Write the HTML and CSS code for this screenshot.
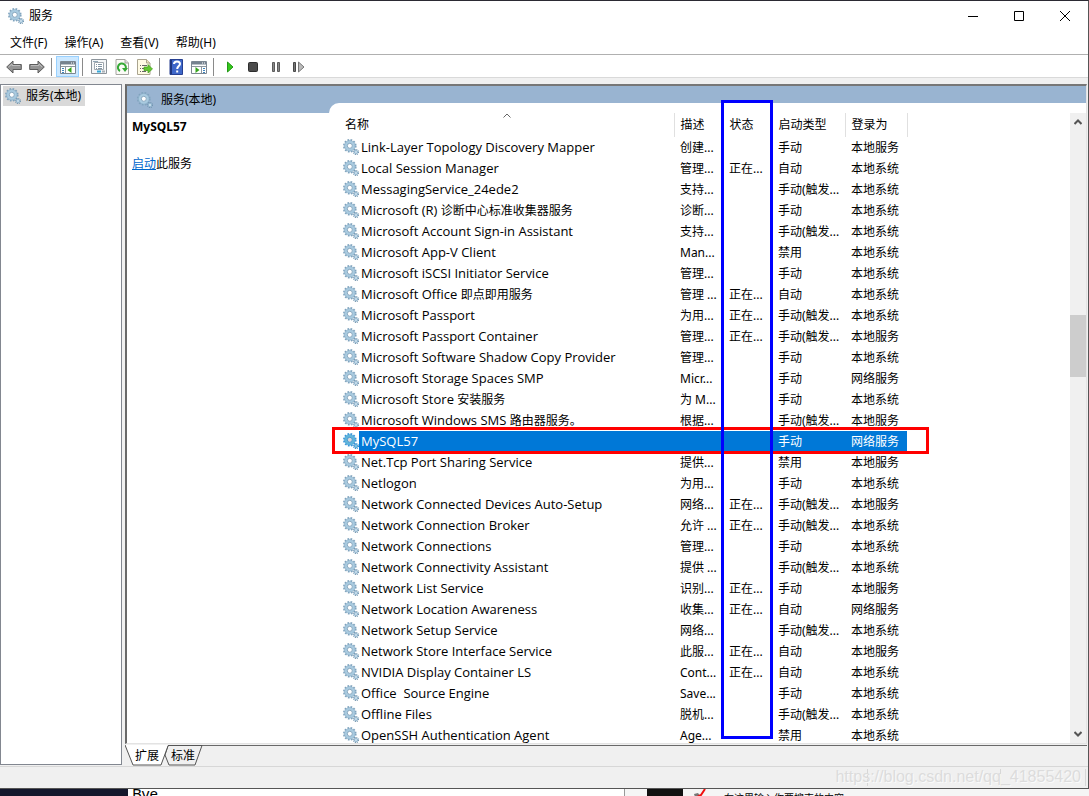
FILE: index.html
```html
<!DOCTYPE html>
<html lang="zh-CN">
<head>
<meta charset="utf-8">
<title>服务</title>
<link rel="stylesheet" href="styles.css">
</head>
<body>
<svg class="defs" aria-hidden="true">
  <defs>
    <symbol id="gear" viewBox="0 0 16 16">
      <circle cx="6.8" cy="6.8" r="5.9" fill="none" stroke="#7fa3bd" stroke-width="1.8" stroke-dasharray="1.7 1.39"/>
      <circle cx="6.8" cy="6.8" r="4" fill="#fff" stroke="#a9cbe0" stroke-width="2.8"/>
      <circle cx="6.8" cy="6.8" r="5.3" fill="none" stroke="#86aac4" stroke-width=".6"/>
      <circle cx="6.8" cy="6.8" r="2.5" fill="#fff" stroke="#6f93b0" stroke-width=".8"/>
      <circle cx="13" cy="13" r="2.5" fill="none" stroke="#7294ae" stroke-width="1.1" stroke-dasharray="1.1 .86"/>
      <circle cx="13" cy="13" r="1.5" fill="#dcebf5" stroke="#8fb4cd" stroke-width="1.2"/>
    </symbol>
  </defs>
</svg>
<div class="window">
  <header class="titlebar">
    <svg class="icon"><use href="#gear"/></svg>
    <h1 class="title">服务</h1>
    <div class="controls">
      <button class="control" aria-label="最小化"><svg viewBox="0 0 10 10"><path d="M0 5.5h10"/></svg></button>
      <button class="control" aria-label="最大化"><svg viewBox="0 0 10 10"><path d="M.5.5h9v9h-9z"/></svg></button>
      <button class="control" aria-label="关闭"><svg viewBox="0 0 10 10"><path d="M0 0l10 10M10 0L0 10"/></svg></button>
    </div>
  </header>
  <nav class="menubar">
    <button class="menu">文件(F)</button>
    <button class="menu">操作(A)</button>
    <button class="menu">查看(V)</button>
    <button class="menu">帮助(H)</button>
  </nav>
  <div class="toolbar">
    <button class="tool" aria-label="后退"><svg viewBox="0 0 16 16"><path d="M.7 8L7 2v3.500h8.300v5H7V14z" fill="#949494" stroke="#5c5c5c"/><path d="M2.500 8l3.500-3v1.500h8" fill="none" stroke="#bdbdbd"/></svg></button>
    <button class="tool" aria-label="前进"><svg viewBox="0 0 16 16"><path d="M15.300 8L9 2v3.500H.7v5H9V14z" fill="#949494" stroke="#5c5c5c"/><path d="M2 6.500h8V5l3 3" fill="none" stroke="#bdbdbd"/></svg></button>
    <span class="divider"></span>
    <button class="tool pressed" aria-label="显示/隐藏控制台树"><svg viewBox="0 0 16 16"><path d="M.5 2.500h15v12H.5z" fill="#fff" stroke="#7c8792"/><path d="M1 3h14v2.500H1z" fill="#75828f"/><path d="M11 4h1m1 0h1" stroke="#fff"/><path d="M1 7.500h14M5.500 7v7" stroke="#8d969e"/><path d="M2 9.500h2m-2 2h2m-2 2h2" stroke="#3d83bd"/><path d="M11.500 8v6l-4-3z" fill="#36a51d"/></svg></button>
    <span class="divider"></span>
    <button class="tool" aria-label="属性"><svg viewBox="0 0 16 16"><path d="M.5.5h15v14H.5z" fill="#f4f6f8" stroke="#8c949b"/><path d="M3.500 3.500h9v7h-9z" fill="#fff" stroke="#a0a8af"/><path d="M2 2.500h5" stroke="#8fa5b5"/><path d="M5 5.500h1m1 0h4M5 7.500h1m1 0h4M5 9.500h1m1 0h4" stroke="#8195a5"/><path d="M6 12.500h4" stroke="#36a8d8" stroke-width="2"/><path d="M11 12.500h3" stroke="#aab1b7" stroke-width="2"/></svg></button>
    <button class="tool" aria-label="刷新"><svg viewBox="0 0 16 16"><path d="M2 .5h9l3.500 3.500v11.500H2z" fill="#fbfbf7" stroke="#a5a5a0"/><path d="M11 .5V4h3.500" fill="#ddd" stroke="#a5a5a0"/><path d="M6 12a4 4 0 1 1 5-1" fill="none" stroke="#35a936" stroke-width="2"/><path d="M8 9h6l-3 4z" fill="#35a936"/></svg></button>
    <button class="tool" aria-label="导出列表"><svg viewBox="0 0 16 16"><path d="M.5.5h9L13 4v11.500H.5z" fill="#fffbe5" stroke="#aaa48f"/><path d="M9.500.5V4H13" fill="#eee4ba" stroke="#aaa48f"/><path d="M3 6.500h1m1 0h5M3 9.500h1m1 0h2M3 12.500h1m1 0h4" stroke="#666"/><path d="M7 8h4V5.500L15.500 10 11 14v-2.500H7z" fill="#62c830" stroke="#429b1e" stroke-width=".7"/></svg></button>
    <span class="divider"></span>
    <button class="tool" aria-label="帮助"><svg viewBox="0 0 16 16"><path d="M2 .5h12.500v15H2z" fill="#3e67c9" stroke="#263f91"/><path d="M3 1v14" stroke="#20367e" stroke-width="2"/><path d="M6 5c0-3.500 6-3.500 6 0 0 2-2.800 2.200-2.800 5" fill="none" stroke="#fff" stroke-width="2"/><path d="M8.200 11.500h2v2h-2z" fill="#fff"/></svg></button>
    <button class="tool" aria-label="显示/隐藏操作窗格"><svg viewBox="0 0 16 16"><path d="M.5 2.500h15v12H.5z" fill="#fff" stroke="#7c8792"/><path d="M1 3h14v2.500H1z" fill="#75828f"/><path d="M11 4h1m1 0h1" stroke="#fff"/><path d="M1 7.500h14M10.500 7v7" stroke="#8d969e"/><path d="M12 9.500h2m-2 2h2m-2 2h2" stroke="#3d83bd"/><path d="M4.500 8v6l4-3z" fill="#36a51d"/></svg></button>
    <span class="divider"></span>
    <button class="tool" aria-label="启动服务"><svg viewBox="0 0 16 16"><path d="M5.500 3v10l5.500-5z" fill="#35c91b" stroke="#239817"/></svg></button>
    <button class="tool" aria-label="停止服务"><svg viewBox="0 0 16 16"><rect x="3.500" y="3.500" width="9" height="9" rx="1" fill="#4b4b4b" stroke="#2d2d2d"/></svg></button>
    <button class="tool" aria-label="暂停服务"><svg viewBox="0 0 16 16"><path d="M4.500 3.500h2v9h-2zM9.500 3.500h2v9h-2z" fill="#888" stroke="#5b5b5b"/></svg></button>
    <button class="tool" aria-label="重启动服务"><svg viewBox="0 0 16 16"><path d="M2.500 3.500h2v9h-2z" fill="#777" stroke="#484848"/><path d="M7.500 3v10l5.500-5z" fill="#bbb" stroke="#777"/></svg></button>
  </div>
  <main class="workspace">
    <aside class="tree">
      <button class="node"><svg class="icon"><use href="#gear"/></svg><span>服务(本地)</span></button>
    </aside>
    <div class="content">
      <section class="pane">
        <h2 class="caption"><svg class="icon"><use href="#gear"/></svg><span>服务(本地)</span></h2>
        <div class="detail">
          <h3 class="service">MySQL57</h3>
          <p class="action"><a href="#start">启动</a>此服务</p>
        </div>
        <div class="list">
          <div class="viewport">
            <svg class="sort" viewBox="0 0 8 5"><path d="M.5 4.500L4 1l3.500 3.500"/></svg>
            <table class="services">
              <colgroup><col class="c-name"><col class="c-desc"><col class="c-state"><col class="c-start"><col class="c-login"></colgroup>
              <thead><tr><th>名称</th><th>描述</th><th>状态</th><th>启动类型</th><th>登录为</th></tr></thead>
              <tbody>
<tr><td><svg class="icon"><use href="#gear"/></svg><span>Link-Layer Topology Discovery Mapper</span></td><td>创建...</td><td></td><td>手动</td><td>本地服务</td></tr>
<tr><td><svg class="icon"><use href="#gear"/></svg><span>Local Session Manager</span></td><td>管理...</td><td>正在...</td><td>自动</td><td>本地系统</td></tr>
<tr><td><svg class="icon"><use href="#gear"/></svg><span>MessagingService_24ede2</span></td><td>支持...</td><td></td><td>手动(触发...</td><td>本地系统</td></tr>
<tr><td><svg class="icon"><use href="#gear"/></svg><span>Microsoft (R) <i>诊断中心标准收集器服务</i></span></td><td>诊断...</td><td></td><td>手动</td><td>本地系统</td></tr>
<tr><td><svg class="icon"><use href="#gear"/></svg><span>Microsoft Account Sign-in Assistant</span></td><td>支持...</td><td></td><td>手动(触发...</td><td>本地系统</td></tr>
<tr><td><svg class="icon"><use href="#gear"/></svg><span>Microsoft App-V Client</span></td><td>Man...</td><td></td><td>禁用</td><td>本地系统</td></tr>
<tr><td><svg class="icon"><use href="#gear"/></svg><span>Microsoft iSCSI Initiator Service</span></td><td>管理...</td><td></td><td>手动</td><td>本地系统</td></tr>
<tr><td><svg class="icon"><use href="#gear"/></svg><span>Microsoft Office <i>即点即用服务</i></span></td><td>管理 ...</td><td>正在...</td><td>自动</td><td>本地系统</td></tr>
<tr><td><svg class="icon"><use href="#gear"/></svg><span>Microsoft Passport</span></td><td>为用...</td><td>正在...</td><td>手动(触发...</td><td>本地系统</td></tr>
<tr><td><svg class="icon"><use href="#gear"/></svg><span>Microsoft Passport Container</span></td><td>管理...</td><td>正在...</td><td>手动(触发...</td><td>本地服务</td></tr>
<tr><td><svg class="icon"><use href="#gear"/></svg><span>Microsoft Software Shadow Copy Provider</span></td><td>管理...</td><td></td><td>手动</td><td>本地系统</td></tr>
<tr><td><svg class="icon"><use href="#gear"/></svg><span>Microsoft Storage Spaces SMP</span></td><td>Micr...</td><td></td><td>手动</td><td>网络服务</td></tr>
<tr><td><svg class="icon"><use href="#gear"/></svg><span>Microsoft Store <i>安装服务</i></span></td><td>为 M...</td><td></td><td>手动</td><td>本地系统</td></tr>
<tr><td><svg class="icon"><use href="#gear"/></svg><span>Microsoft Windows SMS <i>路由器服务。</i></span></td><td>根据...</td><td></td><td>手动(触发...</td><td>本地服务</td></tr>
<tr class="selected"><td><svg class="icon"><use href="#gear"/></svg><span>MySQL57</span></td><td></td><td></td><td>手动</td><td>网络服务</td></tr>
<tr><td><svg class="icon"><use href="#gear"/></svg><span>Net.Tcp Port Sharing Service</span></td><td>提供...</td><td></td><td>禁用</td><td>本地服务</td></tr>
<tr><td><svg class="icon"><use href="#gear"/></svg><span>Netlogon</span></td><td>为用...</td><td></td><td>手动</td><td>本地系统</td></tr>
<tr><td><svg class="icon"><use href="#gear"/></svg><span>Network Connected Devices Auto-Setup</span></td><td>网络...</td><td>正在...</td><td>手动(触发...</td><td>本地服务</td></tr>
<tr><td><svg class="icon"><use href="#gear"/></svg><span>Network Connection Broker</span></td><td>允许 ...</td><td>正在...</td><td>手动(触发...</td><td>本地系统</td></tr>
<tr><td><svg class="icon"><use href="#gear"/></svg><span>Network Connections</span></td><td>管理...</td><td></td><td>手动</td><td>本地系统</td></tr>
<tr><td><svg class="icon"><use href="#gear"/></svg><span>Network Connectivity Assistant</span></td><td>提供 ...</td><td></td><td>手动(触发...</td><td>本地系统</td></tr>
<tr><td><svg class="icon"><use href="#gear"/></svg><span>Network List Service</span></td><td>识别...</td><td>正在...</td><td>手动</td><td>本地服务</td></tr>
<tr><td><svg class="icon"><use href="#gear"/></svg><span>Network Location Awareness</span></td><td>收集...</td><td>正在...</td><td>自动</td><td>网络服务</td></tr>
<tr><td><svg class="icon"><use href="#gear"/></svg><span>Network Setup Service</span></td><td>网络...</td><td></td><td>手动(触发...</td><td>本地系统</td></tr>
<tr><td><svg class="icon"><use href="#gear"/></svg><span>Network Store Interface Service</span></td><td>此服...</td><td>正在...</td><td>自动</td><td>本地服务</td></tr>
<tr><td><svg class="icon"><use href="#gear"/></svg><span>NVIDIA Display Container LS</span></td><td>Cont...</td><td>正在...</td><td>自动</td><td>本地系统</td></tr>
<tr><td><svg class="icon"><use href="#gear"/></svg><span>Office&nbsp; Source Engine</span></td><td>Save...</td><td></td><td>手动</td><td>本地系统</td></tr>
<tr><td><svg class="icon"><use href="#gear"/></svg><span>Offline Files</span></td><td>脱机...</td><td></td><td>手动(触发...</td><td>本地系统</td></tr>
<tr><td><svg class="icon"><use href="#gear"/></svg><span>OpenSSH Authentication Agent</span></td><td>Age...</td><td></td><td>禁用</td><td>本地系统</td></tr>
              </tbody>
            </table>
          </div>
          <div class="scrollbar">
            <svg class="arrow" viewBox="0 0 8 6"><path d="M.5 5L4 1.500 7.500 5"/></svg>
            <div class="track"><div class="thumb"></div></div>
            <svg class="arrow" viewBox="0 0 8 6"><path d="M.5 1L4 4.500 7.500 1"/></svg>
          </div>
          <div class="mark mark-row"></div>
          <div class="mark mark-column"></div>
        </div>
      </section>
      <div class="tabs">
        <svg class="tabshape" viewBox="0 0 80 21"><path d="M40 10L43 .5H77L70 20H44z" fill="#f0f0f0" stroke="#555"/><path d="M0 0L8 20H36L43 0z" fill="#fff"/><path d="M0 0L8 20H36L43 1" fill="none" stroke="#555"/></svg>
        <button class="tab">扩展</button>
        <button class="tab">标准</button>
      </div>
    </div>
  </main>
  <footer class="statusbar">
    <div class="cell cell-main"></div><div class="cell cell-mid"></div><div class="cell cell-end"></div>
    <span class="watermark">https://blog.csdn.net/qq_41855420</span>
  </footer>
</div>
<div class="behind">
  <div class="wallpaper"></div>
  <div class="console"><span>Bye</span></div>
  <div class="editor">
    <div class="block"></div>
    <svg class="stroke" viewBox="0 0 14 8"><path d="M0 5l4-1 3 4H1z" fill="#777"/><path d="M11 0L7 6 3 8" fill="none" stroke="#f01010" stroke-width="2"/></svg>
    <span class="hint">在这里输入你要搜索的内容</span>
  </div>
</div>
</body>
</html>
```
FILE: styles.css
```css
* { box-sizing: border-box; }
body {
  margin: 0;
  height: 100vh;
  display: flex;
  flex-direction: column;
  overflow: hidden;
  background: #fff;
  color: #000;
  font: 12px/20px "Noto Sans", "Noto Sans CJK SC", sans-serif;
}
button {
  margin: 0;
  padding: 0;
  border: 0;
  background: none;
  color: inherit;
  font: inherit;
}
h1, h2, h3, p { margin: 0; font-size: 12px; font-weight: 400; }
.defs { position: absolute; width: 0; height: 0; }
.icon { flex: none; width: 16px; height: 16px; }

.window {
  flex: 1;
  min-height: 0;
  display: flex;
  flex-direction: column;
  border: 1px solid #555;
  border-top-color: #2b2a33;
  border-left: 0;
  background: #f0f0f0;
}
.titlebar {
  flex: none;
  display: flex;
  align-items: center;
  height: 30px;
  padding-left: 8px;
  background: #fff;
}
.title { margin-left: 5px; }
.controls { display: flex; margin-left: auto; }
.control { display: grid; place-items: center; width: 46px; height: 28px; }
.control svg { width: 10px; height: 10px; overflow: visible; fill: none; stroke: #000; }
.menubar {
  flex: none;
  display: flex;
  gap: 17px;
  height: 24px;
  padding-left: 10px;
  background: #fff;
  border-bottom: 1px solid #b0b0b0;
}
.toolbar {
  flex: none;
  display: flex;
  align-items: center;
  height: 23px;
  padding: 1px 0 0 2px;
  background: #fff;
  border-bottom: 1px solid #d9d9d9;
}
.tool { display: grid; place-items: center; width: 23px; height: 21px; }
.tool svg { width: 16px; height: 16px; }
.pressed { background: #cce8ff; border: 1px solid #99d1ff; }
.divider { width: 1px; height: 18px; margin: 0 4px 0 3px; background: #8a8a8a; }

.workspace { flex: 1; min-height: 0; display: flex; gap: 3px; padding: 6px 1px 0 0; }
.tree {
  flex: none;
  width: 122px;
  margin-bottom: 1px;
  padding: 1px 2px;
  border: 1px solid #828790;
  background: #fff;
}
.node { display: flex; align-items: center; height: 20px; padding: 0 4px 0 2px; background: #d9d9d9; }
.node span { margin-left: 5px; }
.content { flex: 1; min-width: 0; display: flex; flex-direction: column; }
.pane {
  flex: 1;
  min-height: 0;
  display: grid;
  grid-template: 17px 10px 1fr / 202px 1fr;
  border: 2px solid #696969;
  border-top-color: #777;
  border-right: 1px solid #e3e3e3;
  border-bottom: 1px solid #e3e3e3;
  background: #99b4d1;
}
.caption { grid-area: 1 / 1 / 3 / 2; display: flex; align-items: center; padding-left: 10px; }
.caption span { margin-left: 8px; }
.detail { grid-area: 3 / 1 / 4 / 2; padding: 4px 5px; background: #fff; }
.service { font-weight: 700; }
.action { margin-top: 17px; }
.action a { color: #0066cc; }
.list {
  position: relative;
  grid-area: 2 / 2 / 4 / 3;
  display: flex;
  min-height: 0;
  padding-top: 10px;
  background: #fff;
  border-top-left-radius: 10px;
}
.viewport { position: relative; flex: 1; min-width: 0; overflow: hidden; }
.sort { position: absolute; left: 174px; top: 0; width: 8px; height: 5px; fill: none; stroke: #666; }
.services { width: 568px; margin-left: 10px; table-layout: fixed; border-collapse: collapse; }
.c-name { width: 335px; }
.c-desc, .c-state { width: 49px; }
.c-start { width: 73px; }
.c-login { width: 62px; }
.services th {
  height: 24px;
  padding: 0 0 0 6px;
  border-right: 1px solid #e0e0e0;
  font-weight: 400;
  text-align: left;
}
.services td { height: 21px; padding: 0 0 0 6px; line-height: 20px; white-space: nowrap; }
.services td:first-child {
  display: flex;
  align-items: flex-start;
  gap: 2px;
  padding-left: 4px;
  font-family: "Open Sans", "Noto Sans CJK SC", sans-serif;
  font-size: 13px;
}
.services .icon { margin-top: 2px; }
.services i { font-size: 12px; font-style: normal; }
.selected { color: #fff; background: linear-gradient(90deg, #fff 20px, #0078d7 20px); }
.selected .icon { filter: saturate(3) brightness(0.85); }
.scrollbar {
  flex: none;
  display: flex;
  flex-direction: column;
  align-items: center;
  width: 16px;
  padding: 6px 0;
  background: #f0f0f0;
}
.arrow { flex: none; width: 8px; height: 6px; fill: none; stroke: #555; stroke-width: 2; }
.track { flex: 1; display: grid; grid-template-rows: 190fr 62fr 354fr; width: 100%; }
.thumb { grid-row: 2; background: #cdcdcd; }
.mark { position: absolute; border: 3px solid; }
.mark-row { left: 3px; top: 324px; width: 597px; height: 27px; border-color: #f00; }
.mark-column { left: 392px; top: -3px; width: 52px; bottom: 4px; border-color: #00f; }

.tabs {
  position: relative;
  flex: none;
  display: flex;
  height: 21px;
  margin-top: 1px;
  padding-left: 10px;
  gap: 12px;
  border-top: 1px solid #696969;
}
.tabshape { position: absolute; left: 0; top: -1px; width: 80px; height: 21px; }
.tab { position: relative; height: 20px; }
.statusbar {
  position: relative;
  flex: none;
  display: flex;
  height: 22px;
  padding-right: 2px;
  border-top: 1px solid #d7d7d7;
}
.cell { margin: 2px 0; border-right: 1px solid #d7d7d7; }
.cell-main { flex: 1; }
.cell-mid { width: 133px; }
.cell-end { width: 85px; }
.watermark {
  position: absolute;
  right: 7px;
  top: 0;
  color: #dcdcdc;
  font: 16px/20px "Liberation Sans", sans-serif;
  text-shadow: 1px 1px 0 #fafafa;
}
.behind { flex: none; display: flex; height: 7px; overflow: hidden; }
.wallpaper { width: 128px; background: #14172c; }
.console { width: 497px; padding-left: 4px; border-right: 1px solid #999; font: 15px/8px "Noto Sans", sans-serif; }
.editor { flex: 1; display: flex; padding-left: 22px; background: #f5f5f5; }
.block { width: 36px; background: #111; }
.stroke { width: 14px; height: 8px; margin: 0 16px 0 11px; }
.hint { font-size: 10px; line-height: 18px; }
```
